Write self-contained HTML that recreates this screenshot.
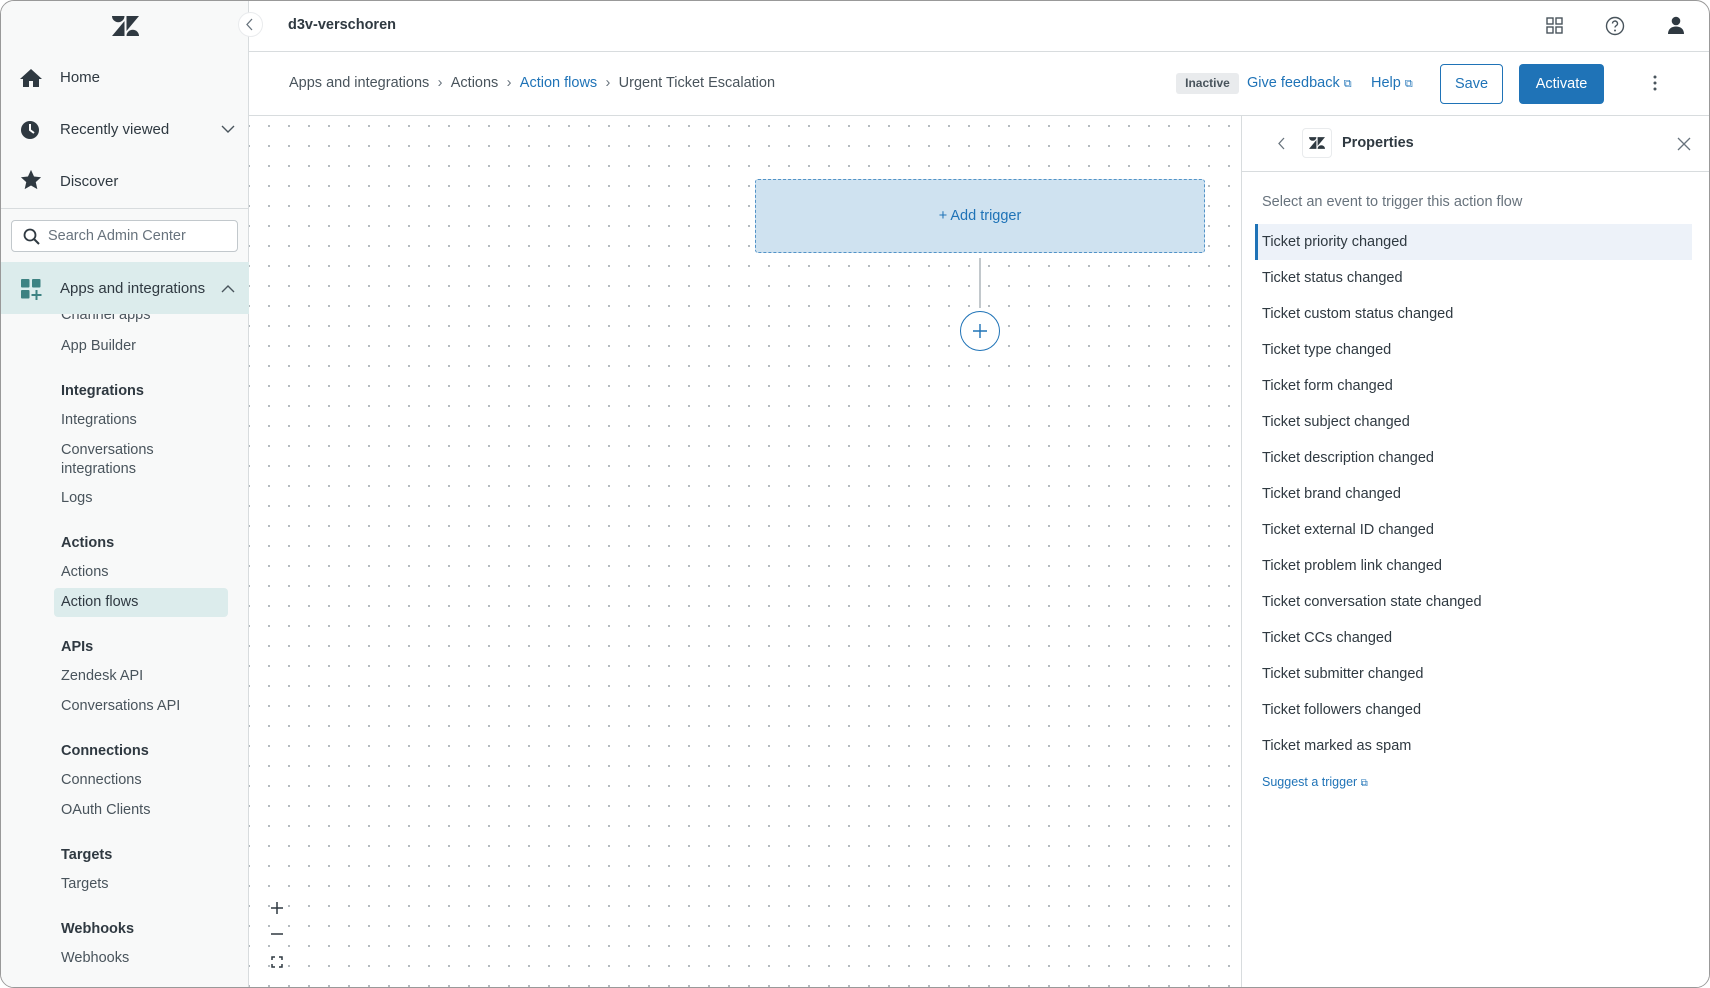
<!DOCTYPE html>
<html><head><meta charset="utf-8"><style>
*{box-sizing:border-box;margin:0;padding:0}
body{width:1710px;height:988px;overflow:hidden;background:#fff;font-family:"Liberation Sans",sans-serif;color:#2f3941;position:relative}
.frame{position:absolute;inset:0;border:1px solid #999;border-radius:14px;overflow:hidden}
.side{position:absolute;left:0;top:0;width:248px;height:988px;background:#f8f9f9;border-right:1px solid #d8dcde}
.a{position:absolute;white-space:nowrap}
.nav{font-size:15px;color:#2f3941}
.sub{font-size:14.5px;color:#49545c;left:60px}
.hd{font-size:14.5px;font-weight:bold;color:#2f3941;left:60px}
.canvas{position:absolute;left:248px;top:115px;width:992px;height:873px;background-color:#fff;background-image:radial-gradient(circle,#a9b0b5 0.9px,transparent 1.2px);background-size:20px 20px;background-position:10px 0px}
.list{font-size:14.5px;color:#2f3941;left:1261px}
.sep{margin:0 4.3px;color:#68737d}
</style></head><body><div class="frame">
<div class="side">
<svg class="a" style="left:111px;top:15px" width="27" height="20" viewBox="0 0 27 20"><path d="M0 0h12.5a6.25 6.25 0 0 1-12.5 0z" fill="#2f3941"/><path d="M14.5 0H27L14.5 15z" fill="#2f3941"/><path d="M0 20L12.5 5V20z" fill="#2f3941"/><path d="M14.5 20a6.25 6.25 0 0 1 12.5 0z" fill="#2f3941"/></svg>
<svg class="a" style="left:18px;top:67px" width="24" height="20" viewBox="0 0 24 20"><path d="M12 1L1 11h3v8h6v-6h4v6h6v-8h3z" fill="#2f3941"/></svg>
<div class="a nav" style="left:59px;top:68px">Home</div>
<svg class="a" style="left:19px;top:119px" width="20" height="20"><circle cx="10" cy="10" r="9" fill="#2f3941"/><path d="M10 4v6l4 3" stroke="#fff" stroke-width="2" fill="none"/></svg>
<div class="a nav" style="left:59px;top:120px">Recently viewed</div>
<svg class="a" style="left:220px;top:124px" width="14" height="9"><path d="M1 1l6 6 6-6" stroke="#49545c" fill="none" stroke-width="1.4"/></svg>
<svg class="a" style="left:18px;top:168px" width="24" height="22" viewBox="0 0 24 24"><path d="M12 1l3.3 7.2 7.7.8-5.8 5.3 1.7 7.7L12 18l-6.9 4 1.7-7.7L1 9l7.7-.8z" fill="#2f3941"/></svg>
<div class="a nav" style="left:59px;top:172px">Discover</div>
<div class="a" style="left:0;top:207px;width:248px;border-top:1px solid #d8dcde"></div>
<div class="a" style="left:10px;top:219px;width:227px;height:32px;border:1px solid #c2c8cc;border-radius:4px;background:#fff"></div>
<svg class="a" style="left:22px;top:227px" width="18" height="18"><circle cx="7" cy="7" r="5.5" stroke="#2f3941" stroke-width="1.8" fill="none"/><path d="M11 11l5 5" stroke="#2f3941" stroke-width="2"/></svg>
<div class="a" style="left:47px;top:227px;font-size:14.5px;color:#68737d">Search Admin Center</div>
<div class="a" style="left:0;top:261px;width:248px;height:52px;background:#dcecec"></div>
<svg class="a" style="left:20px;top:278px" width="22" height="22"><rect x="0" y="0" width="8.5" height="8.5" rx="1" fill="#3d8282"/><rect x="11" y="0" width="8.5" height="8.5" rx="1" fill="#3d8282"/><rect x="0" y="11" width="8.5" height="8.5" rx="1" fill="#3d8282"/><path d="M15.5 11v10M10.5 16h10" stroke="#3d8282" stroke-width="2"/></svg>
<div class="a nav" style="left:59px;top:279px">Apps and integrations</div>
<svg class="a" style="left:220px;top:283px" width="14" height="9"><path d="M1 8l6-6 6 6" stroke="#49545c" fill="none" stroke-width="1.4"/></svg>
<div class="a sub" style="top:306px;clip-path:inset(7px 0 0 0)">Channel apps</div>
<div class="a sub" style="top:337px">App Builder</div>
<div class="a hd" style="top:382px">Integrations</div>
<div class="a sub" style="top:411px">Integrations</div>
<div class="a sub" style="top:441px">Conversations</div>
<div class="a sub" style="top:460px">integrations</div>
<div class="a sub" style="top:489px">Logs</div>
<div class="a hd" style="top:534px">Actions</div>
<div class="a sub" style="top:563px">Actions</div>
<div class="a" style="left:53px;top:587px;width:174px;height:29px;background:#dcecec;border-radius:4px"></div>
<div class="a sub" style="top:593px;color:#2f3941">Action flows</div>
<div class="a hd" style="top:638px">APIs</div>
<div class="a sub" style="top:667px">Zendesk API</div>
<div class="a sub" style="top:697px">Conversations API</div>
<div class="a hd" style="top:742px">Connections</div>
<div class="a sub" style="top:771px">Connections</div>
<div class="a sub" style="top:801px">OAuth Clients</div>
<div class="a hd" style="top:846px">Targets</div>
<div class="a sub" style="top:875px">Targets</div>
<div class="a hd" style="top:920px">Webhooks</div>
<div class="a sub" style="top:949px">Webhooks</div>
</div>
<div class="a" style="left:237px;top:11px;width:25px;height:25px;border-radius:50%;background:#fff;border:1px solid #e9ebed"></div>
<svg class="a" style="left:245px;top:17px" width="8" height="13"><path d="M6 1L1 6.5 6 12" stroke="#68737d" fill="none" stroke-width="1.3"/></svg>
<div class="a" style="left:287px;top:16px;font-size:14.5px;font-weight:bold">d3v-verschoren</div>
<svg class="a" style="left:1545px;top:16px" width="17" height="17"><g fill="none" stroke="#49545c" stroke-width="1.4"><rect x="1" y="1" width="6" height="6"/><rect x="10" y="1" width="6" height="6"/><rect x="1" y="10" width="6" height="6"/><rect x="10" y="10" width="6" height="6"/></g></svg>
<svg class="a" style="left:1604px;top:15px" width="20" height="20"><circle cx="10" cy="10" r="8.5" stroke="#49545c" stroke-width="1.4" fill="none"/><path d="M7.5 7.5a2.5 2.5 0 1 1 3.5 2.3c-.7.4-1 .8-1 1.7" stroke="#49545c" stroke-width="1.4" fill="none"/><circle cx="10" cy="14.5" r="1" fill="#49545c"/></svg>
<svg class="a" style="left:1666px;top:15px" width="18" height="19"><circle cx="9" cy="5" r="4.3" fill="#2f3941"/><path d="M1 18c0-5 3.5-7.5 8-7.5s8 2.5 8 7.5z" fill="#2f3941"/></svg>
<div class="a" style="left:248px;top:50px;width:1462px;border-top:1px solid #d8dcde"></div>
<div class="a" style="left:248px;top:114px;width:1462px;border-top:1px solid #d8dcde"></div>
<div class="a" style="left:288px;top:74px;font-size:14.5px;color:#49545c">Apps and integrations<span class="sep"> › </span>Actions<span class="sep"> › </span><span style="color:#1f73b7">Action flows</span><span class="sep"> › </span>Urgent Ticket Escalation</div>
<div class="a" style="left:1175px;top:72px;width:63px;height:21px;background:#e9ebed;border-radius:3px;font-size:12px;font-weight:bold;color:#49545c;text-align:center;line-height:21px">Inactive</div>
<div class="a" style="left:1246px;top:74px;font-size:14.5px;color:#1f73b7">Give feedback <span style="font-size:11px">⧉</span></div>
<div class="a" style="left:1370px;top:74px;font-size:14.5px;color:#1f73b7">Help <span style="font-size:11px">⧉</span></div>
<div class="a" style="left:1439px;top:63px;width:63px;height:40px;border:1px solid #1f73b7;border-radius:4px;color:#1f73b7;font-size:14.5px;text-align:center;line-height:38px">Save</div>
<div class="a" style="left:1518px;top:63px;width:85px;height:40px;background:#1f73b7;border-radius:4px;color:#fff;font-size:14.5px;text-align:center;line-height:40px">Activate</div>
<svg class="a" style="left:1652px;top:74px" width="4" height="16"><circle cx="2" cy="2" r="1.5" fill="#49545c"/><circle cx="2" cy="8" r="1.5" fill="#49545c"/><circle cx="2" cy="14" r="1.5" fill="#49545c"/></svg>
<div class="canvas"></div>
<div class="a" style="left:754px;top:178px;width:450px;height:74px;background:#cfe2f0;border:1px dashed #5293c7;border-radius:3px;text-align:center;line-height:72px;font-size:14.5px;color:#1f73b7">+ Add trigger</div>
<div class="a" style="left:978px;top:257px;height:50px;border-left:2px solid #c2c8cc"></div>
<div class="a" style="left:959px;top:310px;width:40px;height:40px;border-radius:50%;border:1.5px solid #1f73b7;background:#fff"></div>
<svg class="a" style="left:970px;top:321px" width="18" height="18"><path d="M9 2v14M2 9h14" stroke="#1f73b7" stroke-width="1.4"/></svg>
<svg class="a" style="left:268px;top:899px" width="16" height="72"><g stroke="#2f3941" stroke-width="1.5" fill="none"><path d="M8 2v12M2 8h12"/><path d="M2 34h12"/><path d="M3 60v-3h3M10 57h3v3M13 64v3h-3M6 67h-3v-3"/></g></svg>
<div class="a" style="left:1240px;top:115px;width:470px;height:873px;background:#fff;border-left:1px solid #d8dcde"></div>
<svg class="a" style="left:1277px;top:136px" width="8" height="13"><path d="M6 1L1 6.5 6 12" stroke="#68737d" fill="none" stroke-width="1.3"/></svg>
<div class="a" style="left:1301px;top:127px;width:30px;height:30px;border:1px solid #e9ebed;border-radius:4px"></div>
<svg class="a" style="left:1308px;top:136px" width="16" height="12" viewBox="0 0 27 20"><path d="M0 0h12.5a6.25 6.25 0 0 1-12.5 0z" fill="#2f3941"/><path d="M14.5 0H27L14.5 15z" fill="#2f3941"/><path d="M0 20L12.5 5V20z" fill="#2f3941"/><path d="M14.5 20a6.25 6.25 0 0 1 12.5 0z" fill="#2f3941"/></svg>
<div class="a" style="left:1341px;top:134px;font-size:14.5px;font-weight:bold">Properties</div>
<svg class="a" style="left:1676px;top:136px" width="14" height="14"><path d="M1 1l12 12M13 1L1 13" stroke="#68737d" stroke-width="1.3"/></svg>
<div class="a" style="left:1240px;top:170px;width:470px;border-top:1px solid #d8dcde"></div>
<div class="a" style="left:1261px;top:193px;font-size:14.5px;color:#68737d">Select an event to trigger this action flow</div>
<div class="a" style="left:1254px;top:223px;width:437px;height:36px;background:#edf2f9;border-left:3px solid #1f73b7"></div>
<div class="a list" style="top:233px">Ticket priority changed</div>
<div class="a list" style="top:269px">Ticket status changed</div>
<div class="a list" style="top:305px">Ticket custom status changed</div>
<div class="a list" style="top:341px">Ticket type changed</div>
<div class="a list" style="top:377px">Ticket form changed</div>
<div class="a list" style="top:413px">Ticket subject changed</div>
<div class="a list" style="top:449px">Ticket description changed</div>
<div class="a list" style="top:485px">Ticket brand changed</div>
<div class="a list" style="top:521px">Ticket external ID changed</div>
<div class="a list" style="top:557px">Ticket problem link changed</div>
<div class="a list" style="top:593px">Ticket conversation state changed</div>
<div class="a list" style="top:629px">Ticket CCs changed</div>
<div class="a list" style="top:665px">Ticket submitter changed</div>
<div class="a list" style="top:701px">Ticket followers changed</div>
<div class="a list" style="top:737px">Ticket marked as spam</div>
<div class="a" style="left:1261px;top:774px;font-size:12.5px;color:#1f73b7">Suggest a trigger <span style="font-size:10px">⧉</span></div>
</div></body></html>
